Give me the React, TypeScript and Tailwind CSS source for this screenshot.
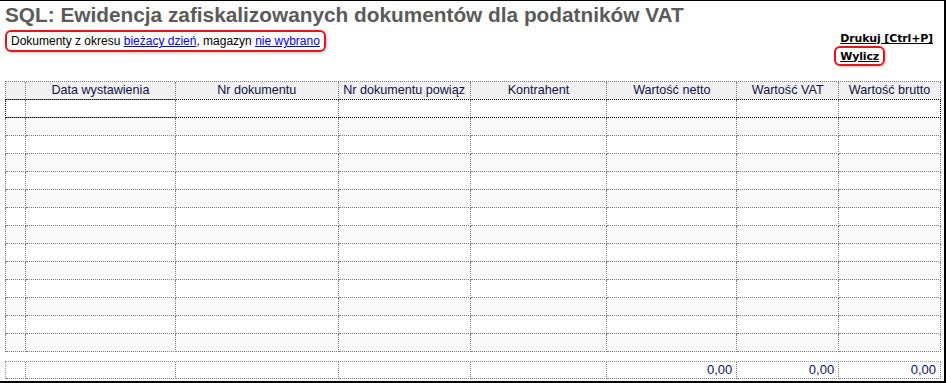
const cols = [
  { w: 'w-[20px]', label: '' },
  { w: 'w-[150px]', label: 'Data wystawienia' },
  { w: 'w-[163px]', label: 'Nr dokumentu' },
  { w: 'w-[132px]', label: 'Nr dokumentu powiąz' },
  { w: 'w-[137px]', label: 'Kontrahent' },
  { w: 'w-[130px]', label: 'Wartość netto' },
  { w: 'w-[102px]', label: 'Wartość VAT' },
  { w: 'w-[102px]', label: 'Wartość brutto' },
];

const totals = ['', '', '', '', '', '0,00', '0,00', '0,00'];

const rows = Array.from({ length: 14 }, (_, i) => i);

export default function App() {
  return (
    <div className="w-[946px] h-[383px] bg-white border-t border-r-2 border-b-2 border-black overflow-hidden font-['Liberation_Sans',Arial,sans-serif] text-black">
      {/* Title */}
      <h1 className="pl-[5px] pt-[2px] h-[26px] text-[20.8px] leading-[24px] font-bold text-[#5a5a5a] whitespace-nowrap">
        SQL: Ewidencja zafiskalizowanych dokumentów dla podatników VAT
      </h1>

      {/* Filters + actions */}
      <div className="flex justify-between h-[54px]">
        <div className="pl-[5px] pt-[1px]">
          <div className="inline-flex items-center h-[22px] px-[4px] border-2 border-[#e8141c] rounded-[6px] text-[12px] shadow-[1px_1px_3px_rgba(0,0,0,0.25)] whitespace-nowrap">
            Dokumenty z okresu&nbsp;
            <a href="#" className="text-[#0000ee] underline">bieżacy dzień</a>
            , magazyn&nbsp;
            <a href="#" className="text-[#0000ee] underline">nie wybrano</a>
          </div>
        </div>
        <div className="flex flex-col items-start pr-[11px] pt-[5px] font-['DejaVu_Sans',Tahoma,sans-serif] text-[11px] font-bold">
          <a href="#" className="underline leading-[13px] tracking-[-0.15px]">Drukuj [Ctrl+P]</a>
          <div className="mt-[1px] -ml-[6px] px-[4px] h-[20px] flex items-center border-2 border-[#e8141c] rounded-[6px] shadow-[1px_1px_3px_rgba(0,0,0,0.25)]">
            <a href="#" className="underline leading-[13px] tracking-[-0.15px]">Wylicz</a>
          </div>
        </div>
      </div>

      {/* Grid */}
      <div className="ml-[5px] w-[936px] text-[12.6px] text-[#10104a]">
        <div className="flex border-t border-l border-dotted border-[#808080] bg-[#f0f0f0]">
          {cols.map((c, i) => (
            <div
              key={i}
              className={`${c.w} h-[18px] flex items-center justify-center border-r border-b border-dotted border-[#808080] whitespace-nowrap overflow-hidden`}
            >
              {c.label}
            </div>
          ))}
        </div>
        {rows.map((r) => (
          <div
            key={r}
            className={`relative flex border-l border-dotted border-[#808080] ${r % 2 === 1 ? 'bg-[#fafafa]' : 'bg-white'}`}
          >
            {cols.map((c, i) => (
              <div key={i} className={`${c.w} h-[18px] border-r border-b border-dotted border-[#808080]`} />
            ))}
            {r === 0 && (
              <div className="absolute z-10 left-[-1px] right-0 top-[-1px] bottom-0 border border-dotted border-[#000] pointer-events-none" />
            )}
          </div>
        ))}

        {/* Totals */}
        <div className="flex mt-[9px] border-t border-l border-dotted border-[#999]">
          {cols.map((c, i) => (
            <div
              key={i}
              className={`${c.w} h-[17px] flex items-center justify-end pr-[4px] border-r border-b border-dotted border-[#808080] text-[13px] text-[#101060]`}
            >
              {totals[i]}
            </div>
          ))}
        </div>
      </div>
    </div>
  );
}
